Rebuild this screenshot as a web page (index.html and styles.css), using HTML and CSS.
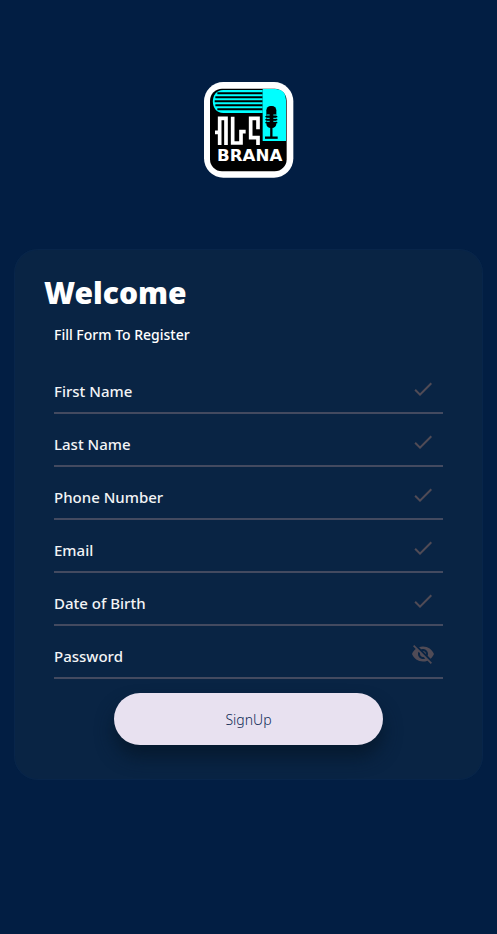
FILE: index.html
```html
<!DOCTYPE html>
<html lang="en">
<head>
<meta charset="utf-8">
<meta name="viewport" content="width=device-width, initial-scale=1">
<title>Brana – Sign up</title>
<link rel="stylesheet" href="styles.css">
</head>
<body>
<main class="page">
  <svg class="logo" viewBox="18 18 270 288" role="img" aria-label="Brana">
    <rect x="18" y="18" width="268" height="287" rx="58" fill="#fff"/>
    <rect x="36" y="38" width="230" height="248" rx="36" fill="#000"/>
    <path d="M194 42H76C34 42 34 111 76 111H194Z" fill="#0ff"/>
    <path d="M58 52H194M52 64H194M50 76H194M52 88H194M58 100H194" stroke="#000" stroke-width="6"/>
    <path d="M194 39H234Q264 41 264 72V195H194Z" fill="#0ff"/>
    <rect x="205" y="90" width="30" height="66" rx="13" fill="#000"/>
    <path d="M202 122H238M202 131H238M202 140H238" stroke="#000" stroke-width="4"/>
    <path d="M220 154V184" stroke="#000" stroke-width="7"/>
    <path d="M201 185H239" stroke="#000" stroke-width="7"/>
    <path d="M206 117H215M226 117H235M206 127H215M226 127H235M206 136H215M226 136H235" stroke="#0ff" stroke-width="3"/>
    <g fill="none" stroke="#fff" stroke-width="11">
      <path d="M51 169H60M65 207V127H84V207"/>
      <path d="M104 122V201H129V167H143"/>
      <path d="M180 160V127H158V185H180V207"/>
    </g>
    <text class="logo-name" x="155" y="256" text-anchor="middle">BRANA</text>
  </svg>

  <form class="card">
    <h1 class="title">Welcome</h1>
    <div class="fields">
      <p class="subtitle">Fill Form To Register</p>
      <div class="field">
        <input type="text" placeholder="First Name" aria-label="First Name">
        <svg class="icon" viewBox="0 0 24 24" aria-hidden="true"><path d="M9 16.17 4.83 12l-1.42 1.41L9 19 21 7l-1.41-1.41z"/></svg>
      </div>
      <div class="field">
        <input type="text" placeholder="Last Name" aria-label="Last Name">
        <svg class="icon" viewBox="0 0 24 24" aria-hidden="true"><path d="M9 16.17 4.83 12l-1.42 1.41L9 19 21 7l-1.41-1.41z"/></svg>
      </div>
      <div class="field">
        <input type="tel" placeholder="Phone Number" aria-label="Phone Number">
        <svg class="icon" viewBox="0 0 24 24" aria-hidden="true"><path d="M9 16.17 4.83 12l-1.42 1.41L9 19 21 7l-1.41-1.41z"/></svg>
      </div>
      <div class="field">
        <input type="email" placeholder="Email" aria-label="Email">
        <svg class="icon" viewBox="0 0 24 24" aria-hidden="true"><path d="M9 16.17 4.83 12l-1.42 1.41L9 19 21 7l-1.41-1.41z"/></svg>
      </div>
      <div class="field">
        <input type="text" placeholder="Date of Birth" aria-label="Date of Birth">
        <svg class="icon" viewBox="0 0 24 24" aria-hidden="true"><path d="M9 16.17 4.83 12l-1.42 1.41L9 19 21 7l-1.41-1.41z"/></svg>
      </div>
      <div class="field">
        <input type="password" placeholder="Password" aria-label="Password">
        <button class="toggle" type="button" aria-label="Show password">
          <svg class="icon" viewBox="0 0 24 24" aria-hidden="true"><path d="M12 7c2.76 0 5 2.24 5 5 0 .65-.13 1.26-.36 1.83l2.92 2.92c1.51-1.26 2.7-2.89 3.43-4.75-1.73-4.39-6-7.5-11-7.5-1.4 0-2.74.25-3.98.7l2.16 2.16C10.74 7.13 11.35 7 12 7zM2 4.27l2.28 2.28.46.46C3.08 8.3 1.78 10.02 1 12c1.73 4.39 6 7.5 11 7.5 1.55 0 3.03-.3 4.38-.84l.42.42L19.73 22 21 20.73 3.27 3 2 4.27zM7.53 9.8l1.55 1.55c-.05.21-.08.43-.08.65 0 1.66 1.34 3 3 3 .22 0 .44-.03.65-.08l1.55 1.55c-.67.33-1.41.53-2.2.53-2.76 0-5-2.24-5-5 0-.79.2-1.53.53-2.2zm4.31-.78 3.15 3.15.02-.16c0-1.66-1.34-3-3-3l-.17.01z"/></svg>
        </button>
      </div>
      <button class="submit" type="submit">SignUp</button>
    </div>
  </form>
</main>
</body>
</html>
```
FILE: styles.css
```css
* {
  box-sizing: border-box;
}

body {
  margin: 0;
  min-height: 100vh;
  background: #021e43;
  color: #fff;
  font-family: "Noto Sans", sans-serif;
}

.page {
  display: flex;
  flex-direction: column;
  align-items: center;
  gap: 71px;
  padding: 82px 14px 0;
}

.logo {
  width: 90px;
  height: 96px;
}

.logo-name {
  fill: #fff;
  font: 700 50px "DejaVu Sans", sans-serif;
}

.card {
  width: 100%;
  padding: 24px 30px 35px;
  border-radius: 24px;
  background: #092444;
  box-shadow: inset 0 0 0 1px #08254a;
}

.title {
  margin: 0;
  font-size: 30px;
  font-weight: 900;
  line-height: 40px;
}

.fields {
  display: flex;
  flex-direction: column;
  padding: 0 10px;
}

.subtitle {
  margin: 12px 0 16px;
  font-size: 14px;
  font-weight: 500;
  line-height: 20px;
}

.field {
  display: flex;
  align-items: center;
  height: 53px;
  padding: 5px 8px 0 0;
  border-bottom: 2px solid #434a60;
}

.field input {
  flex: 1;
  min-width: 0;
  height: 40px;
  padding: 4px 0 0;
  border: 0;
  outline: 0;
  background: none;
  color: #fff;
  font: 500 15px "Noto Sans", sans-serif;
}

.field input::placeholder {
  color: #f3f4f6;
  opacity: 1;
}

.icon {
  display: block;
  width: 24px;
  height: 24px;
  fill: #504b56;
}

.toggle {
  padding: 0;
  border: 0;
  background: none;
}

.submit {
  width: 269px;
  max-width: 100%;
  height: 52px;
  margin: 14px auto 0;
  border: 0;
  border-radius: 26px;
  background: #e8e1f0;
  color: #102c56;
  font: 300 14px "Noto Sans", sans-serif;
  box-shadow: 0 12px 18px rgb(6 24 44 / 90%);
}
```
